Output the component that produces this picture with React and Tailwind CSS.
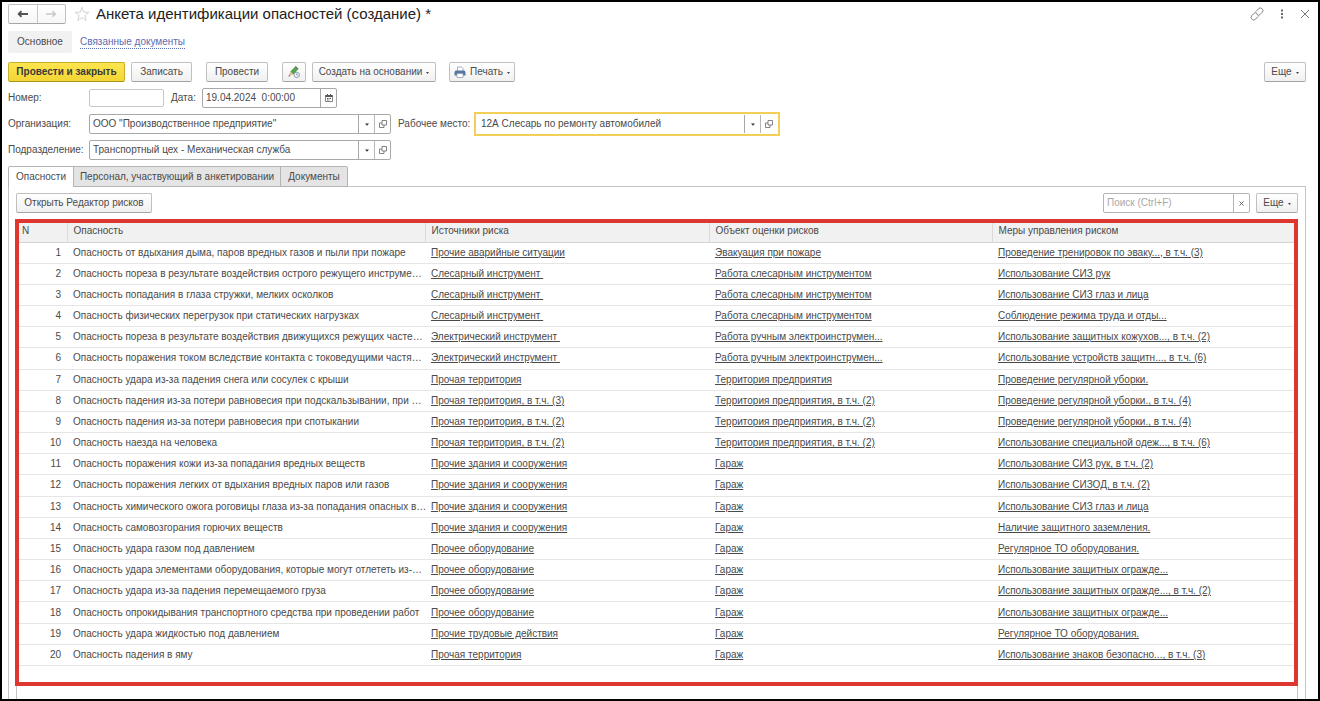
import React from "react";

const rows = [
  ["Опасность от вдыхания дыма, паров вредных газов и пыли при пожаре", "Прочие аварийные ситуации", "Эвакуация при пожаре", "Проведение тренировок по эваку..., в т.ч. (3)"],
  ["Опасность пореза в результате воздействия острого режущего инструме…", "Слесарный инструмент ", "Работа слесарным инструментом", "Использование СИЗ рук"],
  ["Опасность попадания в глаза стружки, мелких осколков", "Слесарный инструмент ", "Работа слесарным инструментом", "Использование СИЗ глаз и лица"],
  ["Опасность физических перегрузок при статических нагрузках", "Слесарный инструмент ", "Работа слесарным инструментом", "Соблюдение режима труда и отды..."],
  ["Опасность пореза в результате воздействия движущихся режущих часте…", "Электрический инструмент ", "Работа ручным электроинструмен...", "Использование защитных кожухов..., в т.ч. (2)"],
  ["Опасность поражения током вследствие контакта с токоведущими частя…", "Электрический инструмент ", "Работа ручным электроинструмен...", "Использование устройств защитн..., в т.ч. (6)"],
  ["Опасность удара из-за падения снега или сосулек с крыши", "Прочая территория", "Территория предприятия", "Проведение регулярной уборки."],
  ["Опасность падения из-за потери равновесия при подскальзывании, при …", "Прочая территория, в т.ч. (3)", "Территория предприятия, в т.ч. (2)", "Проведение регулярной уборки., в т.ч. (4)"],
  ["Опасность падения из-за потери равновесия при спотыкании", "Прочая территория, в т.ч. (2)", "Территория предприятия, в т.ч. (2)", "Проведение регулярной уборки., в т.ч. (4)"],
  ["Опасность наезда на человека", "Прочая территория, в т.ч. (2)", "Территория предприятия, в т.ч. (2)", "Использование специальной одеж..., в т.ч. (6)"],
  ["Опасность поражения кожи из-за попадания вредных веществ", "Прочие здания и сооружения", "Гараж", "Использование СИЗ рук, в т.ч. (2)"],
  ["Опасность поражения легких от вдыхания вредных паров или газов", "Прочие здания и сооружения", "Гараж", "Использование СИЗОД, в т.ч. (2)"],
  ["Опасность химического ожога роговицы глаза из-за попадания опасных в…", "Прочие здания и сооружения", "Гараж", "Использование СИЗ глаз и лица"],
  ["Опасность самовозгорания горючих веществ", "Прочие здания и сооружения", "Гараж", "Наличие защитного заземления."],
  ["Опасность удара газом под давлением", "Прочее оборудование", "Гараж", "Регулярное ТО оборудования."],
  ["Опасность удара элементами оборудования, которые могут отлететь из-…", "Прочее оборудование", "Гараж", "Использование защитных огражде..."],
  ["Опасность удара из-за падения перемещаемого груза", "Прочее оборудование", "Гараж", "Использование защитных огражде..., в т.ч. (2)"],
  ["Опасность опрокидывания транспортного средства при проведении работ", "Прочее оборудование", "Гараж", "Использование защитных огражде..."],
  ["Опасность удара жидкостью под давлением", "Прочие трудовые действия", "Гараж", "Регулярное ТО оборудования."],
  ["Опасность падения в яму", "Прочая территория", "Гараж", "Использование знаков безопасно..., в т.ч. (3)"],
];

const headers = ["N", "Опасность", "Источники риска", "Объект оценки рисков", "Меры управления риском"];

function Button({ children, className = "", ...rest }) {
  return (
    <button
      type="button"
      className={`flex h-5 shrink-0 items-center justify-center rounded-xs border border-[#c0c0c0] border-b-[#a4a4a4] bg-linear-to-b from-white to-[#f0f0f0] whitespace-nowrap ${className}`}
      {...rest}
    >
      {children}
    </button>
  );
}

function MenuDash() {
  return (
    <svg className="ml-1 h-1 w-[3px]" viewBox="0 0 3 4" aria-hidden="true">
      <path d="M0 2h3L1.500 4z" fill="#444" />
    </svg>
  );
}

function OpenIcon() {
  return (
    <svg className="size-2" viewBox="0 0 8 8" fill="none" stroke="#666" aria-hidden="true">
      <path d="M3 .5h4.500v4.500H3zM3 3H.5v4.500H5V5" strokeWidth="0.8" />
    </svg>
  );
}

function Reference({ id, value, focused = false, className }) {
  return (
    <div
      className={`flex ${className} ${focused ? "h-6 border-2 border-[#f3cf57] px-0.5 py-px" : "h-5 rounded-xs border border-[#a8a8a8]"}`}
    >
      <div className="relative flex min-w-0 flex-1">
        <select id={id} defaultValue={value} className="w-full appearance-none bg-transparent pl-[3px] outline-none">
          <option>{value}</option>
        </select>
        <span className="pointer-events-none absolute inset-y-0 right-0 flex w-4 items-center justify-center border-l border-[#a8a8a8]">
          <svg className="h-[3px] w-1" viewBox="0 0 4 3" aria-hidden="true">
            <path d="M0 .5h4L2 2.700z" fill="#333" />
          </svg>
        </span>
      </div>
      <button type="button" aria-label="Открыть" className="flex w-4 items-center justify-center border-l border-[#b8b8b8]">
        <OpenIcon />
      </button>
    </div>
  );
}

export default function App() {
  return (
    <div
      className="flex min-h-screen flex-col border-2 border-black bg-white text-[10px] leading-3 text-[#4a4a4a]"
      style={{ fontFamily: '"Liberation Sans", Arial, sans-serif' }}
    >
      <header className="flex items-center justify-between pt-0.5 pr-2 pl-1.5">
        <div className="flex items-center">
          <div className="flex h-5 w-[58px] rounded-xs border border-[#c0c0c0] border-b-[#a8a8a8] bg-linear-to-b from-white to-[#f6f6f6]">
            <button type="button" aria-label="Назад" className="flex flex-1 items-center justify-center border-r border-[#c8c8c8]">
              <svg className="h-2 w-3" viewBox="0 0 12 8" fill="none" stroke="#555" strokeWidth="1.900" aria-hidden="true">
                <path d="M1.500 4H11M4.500 1.200L1.700 4l2.800 2.800" />
              </svg>
            </button>
            <button type="button" aria-label="Вперед" className="flex flex-1 items-center justify-center">
              <svg className="h-2 w-3" viewBox="0 0 12 8" fill="none" stroke="#c8c8c8" strokeWidth="1.600" aria-hidden="true">
                <path d="M1 4h9.500M7.500 1.200L10.300 4 7.500 6.800" />
              </svg>
            </button>
          </div>
          <button type="button" aria-label="Избранное" className="ml-2 flex">
            <svg className="size-4" viewBox="0 0 16 16" fill="none" stroke="#c8c8c8" strokeWidth="0.8" aria-hidden="true">
              <path d="M8 1.300l1.750 4.900 5.100.1-4.050 3.200 1.450 5L8 11.600l-4.250 2.900 1.450-5L1.150 6.300l5.100-.1z" />
            </svg>
          </button>
          <h1 className="ml-1.5 text-[15px] leading-5 text-[#222]">Анкета идентификации опасностей (создание) *</h1>
        </div>
        <div className="flex items-center gap-3">
          <button type="button" aria-label="Получить ссылку">
            <svg className="size-3.5" viewBox="0 0 14 14" fill="none" stroke="#808080" strokeWidth="1" strokeLinecap="round" aria-hidden="true">
              <path d="M6 4.300l2.700-2.700a2.200 2.200 0 0 1 3.100 0l.5.5a2.200 2.200 0 0 1 0 3.100L10 7.600a2.200 2.200 0 0 1-3 .1M8 9.700l-2.700 2.700a2.200 2.200 0 0 1-3.100 0l-.5-.5a2.200 2.200 0 0 1 0-3.100L4 6.400a2.200 2.200 0 0 1 3-.1" />
            </svg>
          </button>
          <button type="button" aria-label="Меню" className="ml-0.5">
            <svg className="h-3 w-2" viewBox="0 0 8 12" fill="#666" aria-hidden="true">
              <path d="M3 1.500h2v2H3zM3 5h2v2H3zM3 8.500h2v2H3z" />
            </svg>
          </button>
          <button type="button" aria-label="Закрыть" className="ml-0.5">
            <svg className="size-2.5" viewBox="0 0 10 10" stroke="#777" strokeWidth="1" aria-hidden="true">
              <path d="M1 1l8 8M9 1L1 9" />
            </svg>
          </button>
        </div>
      </header>

      <nav className="mt-[7px] flex items-center gap-2 pl-1.5">
        <a href="#main" className="flex h-[22px] w-16 items-center justify-center rounded-xs bg-[#f1f1f1]">Основное</a>
        <a href="#related" className="border-b border-dotted border-[#5a6db2] text-[#5a6db2]">Связанные документы</a>
      </nav>

      <div className="mt-[9px] flex items-center pr-3 pl-1.5">
        <button
          type="button"
          className="h-5 w-[117px] rounded-xs border border-[#c9b02c] border-b-[#a8921c] bg-linear-to-b from-[#fde54f] to-[#f2d633] font-bold whitespace-nowrap text-[#3a3a3a]"
        >
          Провести и закрыть
        </button>
        <Button className="ml-1.5 w-[61px]">Записать</Button>
        <Button className="ml-[14px] w-[62px]">Провести</Button>
        <Button className="ml-[14px] w-6" aria-label="Отложить проведение">
          <svg className="size-3.5" viewBox="0 0 14 14" aria-hidden="true">
            <path d="M3.300 6.600L7.800 1.900l3 2.900-4.600 4.700z" fill="#55a04d" />
            <path d="M7.800 1.900l.8-.8 3 2.900-.8.8z" fill="#3f6b3c" />
            <path d="M3.300 6.600l2.900 2.900L1.500 11.500z" fill="#e2bf8c" />
            <path d="M2.100 9.900l1 1-1.600.6z" fill="#444" />
            <circle cx="9.800" cy="9.900" r="2.700" fill="#f5f8fb" stroke="#8396a8" strokeWidth="0.9" />
            <path d="M9.800 8.300v1.800h1.300" fill="none" stroke="#6d8194" strokeWidth="0.8" />
          </svg>
        </Button>
        <Button className="ml-1.5 w-[124px]" aria-haspopup="menu">
          Создать на основании <MenuDash />
        </Button>
        <Button className="ml-[13px] w-[66px]" aria-haspopup="menu">
          <svg className="mr-1 size-3" viewBox="0 0 12 12" aria-hidden="true">
            <path d="M3.500 5V1h4l1.500 1.500V5" fill="#fff" stroke="#8fa0b0" strokeWidth="0.8" />
            <path d="M1.500 4.500h9L11.500 6v3.500H.5V6z" fill="#5578a0" />
            <path d="M3 7.500h6v4H3z" fill="#fff" stroke="#8fa0b0" strokeWidth="0.8" />
          </svg>
          Печать <MenuDash />
        </Button>
        <Button className="ml-auto w-[42px]" aria-haspopup="menu">
          Еще <MenuDash />
        </Button>
      </div>

      <form className="mt-1.5 flex flex-col gap-1.5 pl-1.5" onSubmit={(e) => e.preventDefault()}>
        <div className="flex h-5 items-center">
          <label htmlFor="number" className="w-[81px]">Номер:</label>
          <input id="number" className="h-[18px] w-[75px] rounded-xs border border-[#c8c8c8] px-1" />
          <label htmlFor="date" className="ml-[7px] w-[31px]">Дата:</label>
          <div className="flex h-5 w-[135px] rounded-xs border border-[#a8a8a8]">
            <input id="date" defaultValue="19.04.2024  0:00:00" className="min-w-0 flex-1 px-[3px] outline-none" />
            <button type="button" aria-label="Выбрать дату" className="flex w-4 items-center justify-center border-l border-[#a8a8a8]">
              <svg className="size-2" viewBox="0 0 8 8" aria-hidden="true">
                <path d="M.5 1.500h7v6h-7z" fill="#fff" stroke="#666" strokeWidth="0.8" />
                <path d="M.5 1h7v2h-7zM2 0h1v1H2zM5 0h1v1H5zM2 4h1v1H2zM3.500 4h1v1h-1zM5 4h1v1H5zM2 5.600h1v.8H2zM3.500 5.600h1v.8h-1z" fill="#555" />
              </svg>
            </button>
          </div>
        </div>
        <div className="flex h-5 items-center">
          <label htmlFor="org" className="w-[81px]">Организация:</label>
          <Reference id="org" value={'ООО "Производственное предприятие"'} className="w-[302px]" />
          <label htmlFor="workplace" className="ml-[7px] w-[76px] whitespace-nowrap">Рабочее место:</label>
          <Reference id="workplace" value="12А Слесарь по ремонту автомобилей" focused className="w-[306px]" />
        </div>
        <div className="flex h-5 items-center">
          <label htmlFor="dept" className="w-[81px]">Подразделение:</label>
          <Reference id="dept" value="Транспортный цех - Механическая служба" className="w-[302px]" />
        </div>
      </form>

      <div role="tablist" className="relative z-10 mt-1.5 -mb-px flex h-[21px] pl-1.5">
        <button type="button" role="tab" aria-selected="true" className="w-[66px] rounded-tl-xs border border-b-0 border-[#b4b4b4] bg-white">
          Опасности
        </button>
        <button type="button" role="tab" aria-selected="false" className="w-[207px] border border-l-0 border-[#b4b4b4] bg-[#e4e4e4]">
          Персонал, участвующий в анкетировании
        </button>
        <button type="button" role="tab" aria-selected="false" className="w-[67px] rounded-tr-xs border border-l-0 border-[#b4b4b4] bg-[#e4e4e4]">
          Документы
        </button>
      </div>

      <main className="mr-3 ml-1.5 flex flex-1 flex-col border border-b-0 border-[#c4c4c4] px-[7px] pt-1.5">
        <div className="flex items-center justify-between">
          <Button className="w-[136px]">Открыть Редактор рисков</Button>
          <div className="flex gap-1.5">
            <div className="flex h-5 w-[147px] rounded-xs border border-[#b4b4b4]">
              <input aria-label="Поиск" placeholder="Поиск (Ctrl+F)" className="min-w-0 flex-1 px-[3px] outline-none placeholder:text-[#a8a8a8]" />
              <button type="button" aria-label="Очистить" className="flex w-4 items-center justify-center border-l border-[#b4b4b4]">
                <svg className="size-[5px]" viewBox="0 0 5 5" stroke="#555" aria-hidden="true">
                  <path d="M.5.5l4 4M4.500.5l-4 4" strokeWidth="0.9" />
                </svg>
              </button>
            </div>
            <Button className="w-[42px]" aria-haspopup="menu">
              Еще <MenuDash />
            </Button>
          </div>
        </div>

        <div className="mt-1.5 flex flex-1 flex-col border-x border-[#c4c4c4]">
          <div className="-mr-px -ml-0.5 border-4 border-[#de3730] pb-4">
            <table className="h-[443px] w-full table-fixed border-collapse">
              <colgroup>
                <col className="w-12" />
                <col className="w-[358px]" />
                <col className="w-[284px]" />
                <col className="w-[283px]" />
                <col />
              </colgroup>
              <thead>
                <tr className="h-[19px] border-b border-[#d4d4d4] bg-[#f1f1f1] text-left">
                  {headers.map((title, i) => (
                    <th key={title} scope="col" className={`pb-0.5 font-normal ${i === 0 ? "pl-[3px]" : "border-l border-[#dadada] pl-1.5"}`}>
                      {title}
                    </th>
                  ))}
                </tr>
              </thead>
              <tbody>
                {rows.map(([hazard, ...links], i) => (
                  <tr key={hazard} className="border-b border-[#e6e6e6]">
                    <td className="pr-1.5 text-right">{i + 1}</td>
                    <td className="pl-1.5 whitespace-nowrap">{hazard}</td>
                    {links.map((text, j) => (
                      <td key={j} className="pl-1.5 whitespace-nowrap">
                        <a href="#details" className="whitespace-pre underline">{text}</a>
                      </td>
                    ))}
                  </tr>
                ))}
              </tbody>
            </table>
          </div>
        </div>
      </main>
    </div>
  );
}
